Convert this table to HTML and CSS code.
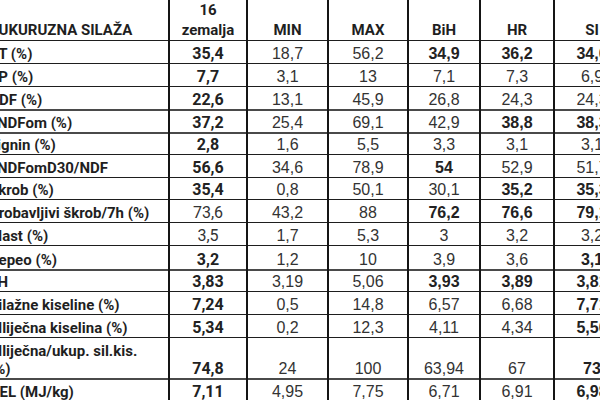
FILE: index.html
```html
<!DOCTYPE html>
<html lang="hr">
<head>
<meta charset="utf-8">
<title>Kukuruzna silaža</title>
<link rel="stylesheet" href="styles.css">
</head>
<body>
<div class="sheet">
<table class="grid">
  <colgroup>
    <col class="c-label">
    <col class="c-all">
    <col class="c-min">
    <col class="c-max">
    <col class="c-bih">
    <col class="c-hr">
    <col class="c-si">
  </colgroup>
  <thead>
    <tr class="head">
      <th class="label">KUKURUZNA SILAŽA</th>
      <th>16<br>zemalja</th>
      <th>MIN</th>
      <th>MAX</th>
      <th>BiH</th>
      <th>HR</th>
      <th>SI</th>
    </tr>
  </thead>
  <tbody>
    <tr><td class="label">ST (%)</td><td class="first b">35,4</td><td>18,7</td><td>56,2</td><td class="b">34,9</td><td class="b">36,2</td><td class="b">34,6</td></tr>
    <tr><td class="label">SP (%)</td><td class="first b">7,7</td><td>3,1</td><td>13</td><td>7,1</td><td>7,3</td><td>6,9</td></tr>
    <tr><td class="label">ADF (%)</td><td class="first b">22,6</td><td>13,1</td><td>45,9</td><td>26,8</td><td>24,3</td><td>24,3</td></tr>
    <tr class="thick"><td class="label">aNDFom (%)</td><td class="first b">37,2</td><td>25,4</td><td>69,1</td><td>42,9</td><td class="b">38,8</td><td class="b">38,3</td></tr>
    <tr class="thick short"><td class="label">Lignin (%)</td><td class="first b">2,8</td><td>1,6</td><td>5,5</td><td>3,3</td><td>3,1</td><td>3,1</td></tr>
    <tr><td class="label">aNDFomD30/NDF</td><td class="first b">56,6</td><td>34,6</td><td>78,9</td><td class="b">54</td><td>52,9</td><td>51,7</td></tr>
    <tr class="short"><td class="label">Škrob (%)</td><td class="first b">35,4</td><td>0,8</td><td>50,1</td><td>30,1</td><td class="b">35,2</td><td class="b">35,3</td></tr>
    <tr><td class="label">Probavljivi škrob/7h (%)</td><td class="first">73,6</td><td>43,2</td><td>88</td><td class="b">76,2</td><td class="b">76,6</td><td class="b">79,1</td></tr>
    <tr><td class="label">Mast (%)</td><td class="first">3,5</td><td>1,7</td><td>5,3</td><td>3</td><td>3,2</td><td>3,2</td></tr>
    <tr class="tall"><td class="label">Pepeo (%)</td><td class="first b">3,2</td><td>1,2</td><td>10</td><td>3,9</td><td>3,6</td><td class="b">3,1</td></tr>
    <tr class="thick short"><td class="label">pH</td><td class="first b">3,83</td><td>3,19</td><td>5,06</td><td class="b">3,93</td><td class="b">3,89</td><td class="b">3,81</td></tr>
    <tr><td class="label">Silažne kiseline (%)</td><td class="first b">7,24</td><td>0,5</td><td>14,8</td><td>6,57</td><td>6,68</td><td class="b">7,71</td></tr>
    <tr><td class="label">Mliječna kiselina (%)</td><td class="first b">5,34</td><td>0,2</td><td>12,3</td><td>4,11</td><td>4,34</td><td class="b">5,56</td></tr>
    <tr class="double"><td class="label">Mliječna/ukup. sil.kis.<br>(%)</td><td class="first b">74,8</td><td>24</td><td>100</td><td>63,94</td><td>67</td><td class="b">73</td></tr>
    <tr class="thick"><td class="label">NEL (MJ/kg)</td><td class="first b">7,11</td><td>4,95</td><td>7,75</td><td>6,71</td><td>6,91</td><td class="b">6,98</td></tr>
  </tbody>
</table>
</div>
</body>
</html>
```

FILE: styles.css
```css
html, body {
  margin: 0;
  padding: 0;
  background: #ffffff;
}

body {
  width: 600px;
  height: 400px;
  overflow: hidden;
}

.sheet {
  margin-left: -15px;
}

.grid {
  border-collapse: collapse;
  table-layout: fixed;
  width: 644px;
  color: #262626;
}

.c-label { width: 183px; }
.c-all { width: 78px; }
.c-min { width: 81px; }
.c-max { width: 80px; }
.c-bih { width: 72px; }
.c-hr { width: 74px; }
.c-si { width: 76px; }

.grid th,
.grid td {
  padding: 0 3px;
  vertical-align: bottom;
  text-align: center;
  border-top: 1px solid #1e1e1e;
  border-bottom: 1px solid #1e1e1e;
  border-left: 2px solid #151515;
  border-right: 2px solid #151515;
}

.grid tr {
  height: 23px;
}

.grid th {
  font: 700 15px/20px "Roboto", "Liberation Sans", sans-serif;
  color: #1f1f1f;
  border-top: none;
  padding-bottom: 0;
}

.grid .head {
  height: 40px;
}

.grid td {
  font: 400 16px/18px "Liberation Sans", Arial, sans-serif;
  color: #333333;
}

.grid td.b {
  font-weight: 700;
  color: #222222;
}

.grid td.first {
  font-family: "Roboto", "Liberation Sans", sans-serif;
  font-size: 16px;
}

.grid .label {
  text-align: left;
  padding-left: 2px;
  font: 700 15px/18px "Roboto", "Liberation Sans", sans-serif;
  color: #1f1f1f;
  white-space: nowrap;
}

.grid th.label {
  line-height: 20px;
}

.grid tr.thick td {
  border-top: 2px solid #4a4a4a;
}

.grid tr.short {
  height: 22px;
}

.grid tr.tall {
  height: 24px;
}

.grid tr.double {
  height: 41px;
}
```
